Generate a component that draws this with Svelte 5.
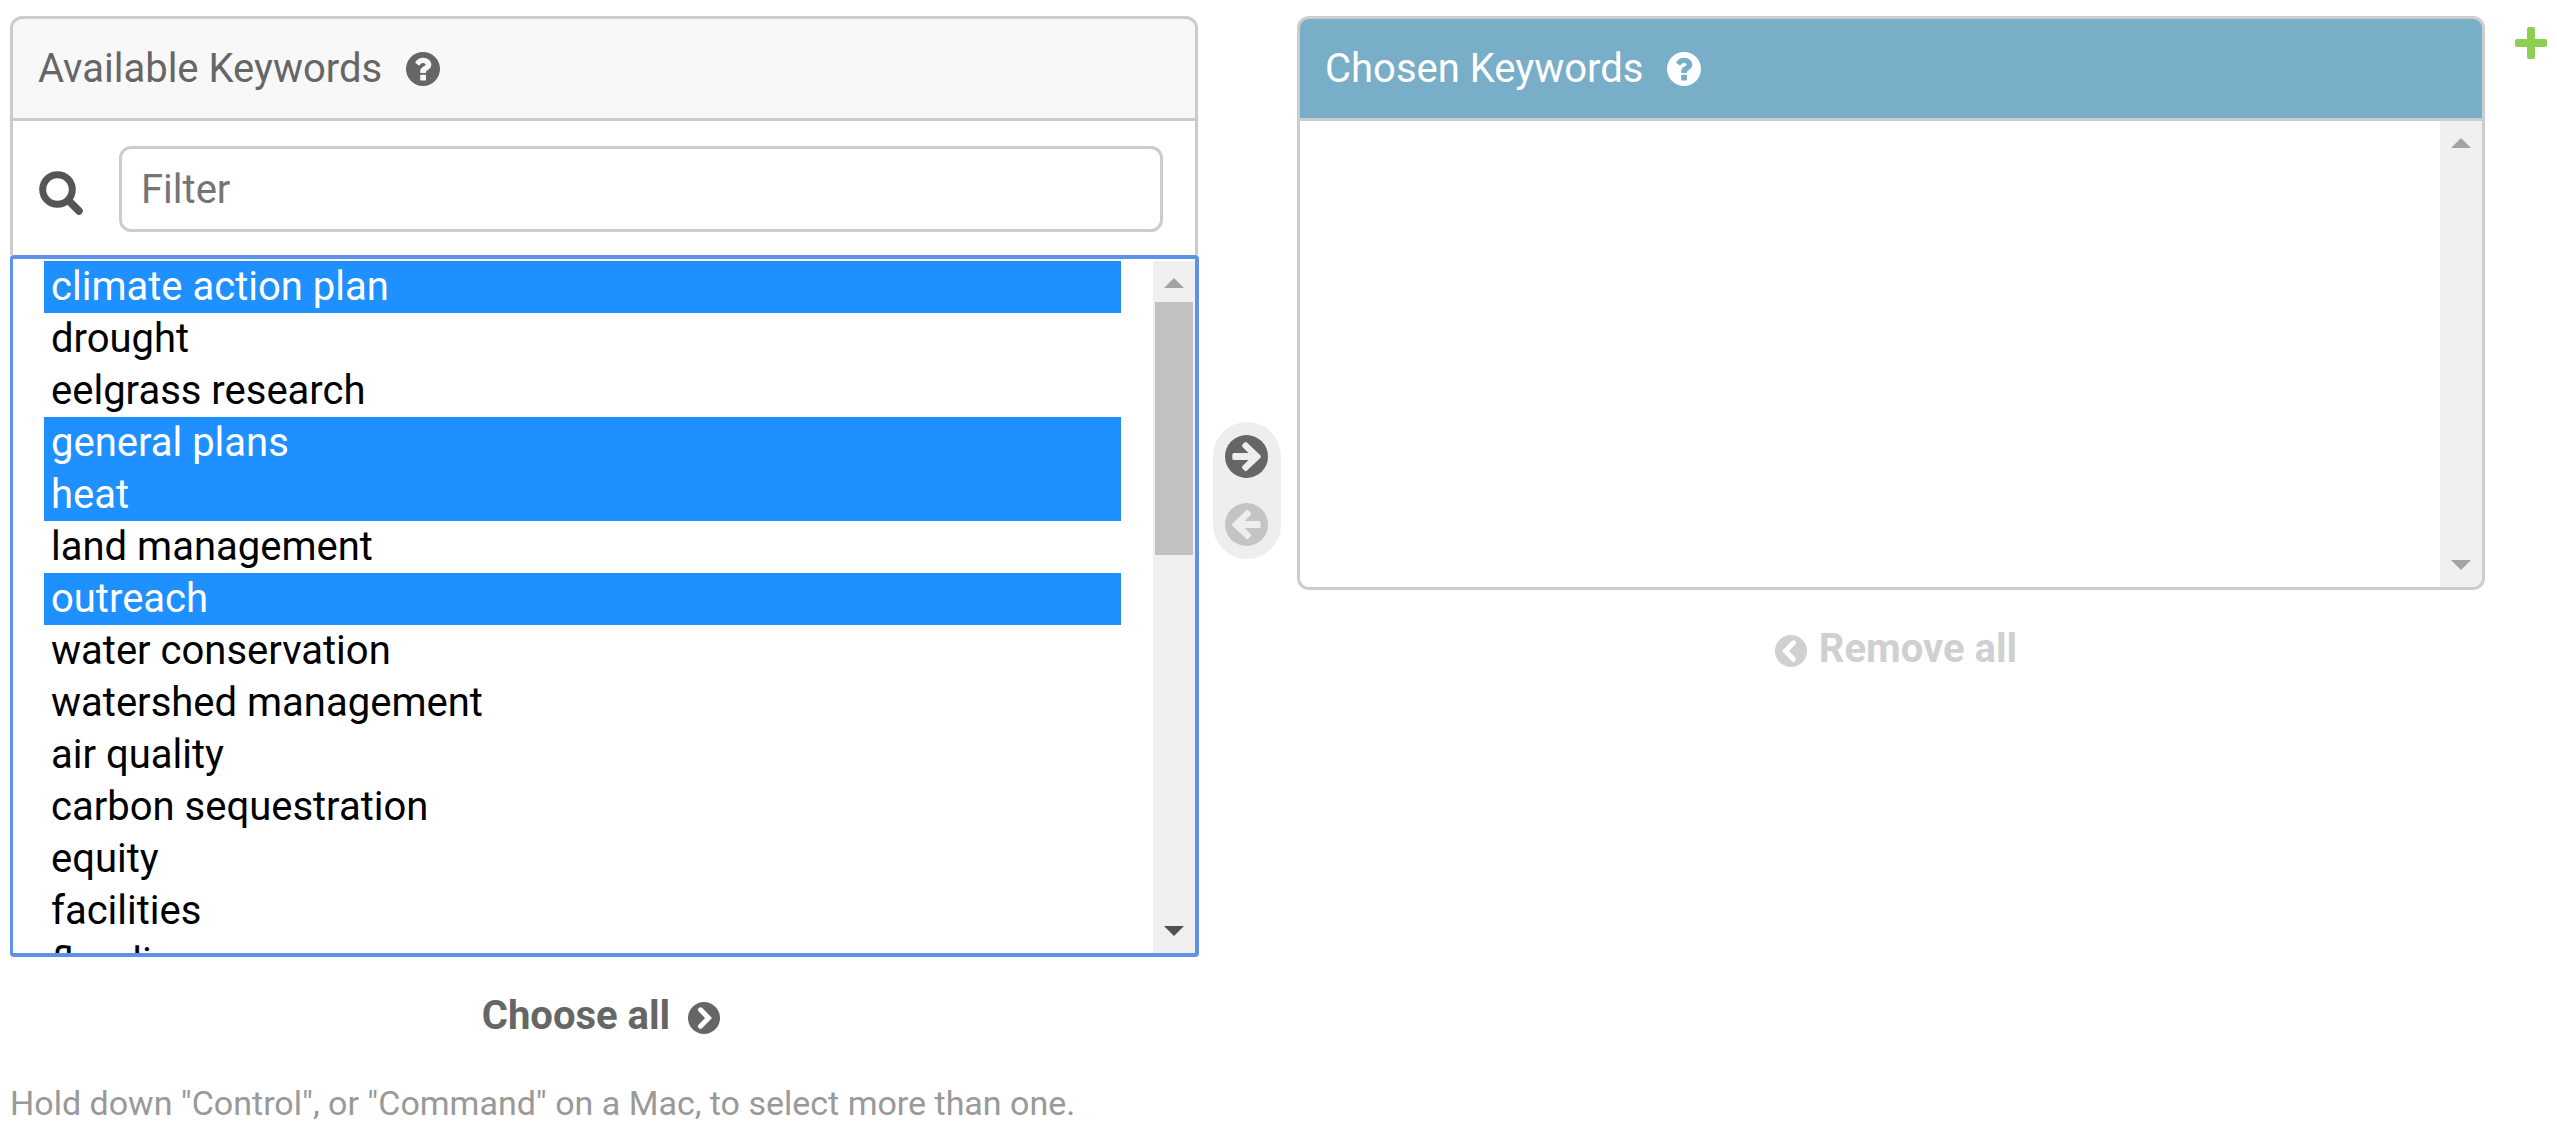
<script>
  const keywords = [
    'climate action plan', 'drought', 'eelgrass research', 'general plans', 'heat',
    'land management', 'outreach', 'water conservation', 'watershed management',
    'air quality', 'carbon sequestration', 'equity', 'facilities', 'flooding'
  ];
  let selected = $state(['climate action plan', 'general plans', 'heat', 'outreach']);
  let picked = $state([]);
</script>

{#snippet help()}
  <svg class="help" viewBox="0 0 34 34" aria-hidden="true">
    <path fill="currentColor" fill-rule="evenodd" d="M17 0a17 17 0 1 0 0 34a17 17 0 0 0 0-34zM14.900 22.800h4.400a.7.7 0 0 1 .7.7v4.200a.7.7 0 0 1-.7.7h-4.400a.7.7 0 0 1-.7-.7v-4.200a.7.7 0 0 1 .7-.7zM17.300 5.700c4.300 0 8 3 8 6.900 0 3.300-2.100 4.700-3.800 5.700-1.100.6-1.500 1.100-1.500 1.900 0 .5-.3.800-.7.800h-4.400c-.4 0-.7-.3-.7-.7v-.9c0-2.600 1.700-4 3.300-4.800 1.300-.6 2-1 2-2 0-1-1.200-1.700-2.400-1.700-1.500 0-2.300.7-3.600 2.300-.3.300-.6.400-1 .1l-3-2.200c-.3-.2-.4-.6-.2-1 1.900-2.900 4.400-4.400 8-4.400z" />
  </svg>
{/snippet}

<main>
  <div class="selector">
    <section class="column">
      <div class="head">
        <label for="available">Available Keywords</label>{@render help()}
      </div>
      <div class="filter">
        <label for="filter" aria-label="Filter keywords">
          <svg class="search" viewBox="0 0 44 44" fill="none" stroke="#555" aria-hidden="true">
            <circle cx="18.500" cy="18.500" r="14.800" stroke-width="7" />
            <path d="M30 30L40 40" stroke-width="7.500" stroke-linecap="round" />
          </svg>
        </label>
        <input id="filter" type="text" placeholder="Filter" />
      </div>
      <div class="list active">
        <select id="available" multiple bind:value={selected}>
          {#each keywords as word}<option value={word}>{word}</option>{/each}
        </select>
        <div class="bar" aria-hidden="true">
          <svg viewBox="0 0 20 10"><path d="M0 10L10 0L20 10z" fill="#a3a3a3" /></svg>
          <div class="track"><div class="thumb"></div></div>
          <svg viewBox="0 0 20 10"><path d="M0 0L10 10L20 0z" fill="#505050" /></svg>
        </div>
      </div>
      <button class="all">
        <span>Choose all</span>
        <svg viewBox="0 0 32 32" aria-hidden="true">
          <circle cx="16" cy="16" r="16" fill="currentColor" />
          <path d="M12.500 7.800L20.500 16L12.500 24.200" fill="none" stroke="#fff" stroke-width="5" stroke-linecap="round" />
        </svg>
      </button>
    </section>

    <div class="movers">
      <button aria-label="Choose">
        <svg viewBox="0 0 43 43" aria-hidden="true">
          <circle cx="21.500" cy="21.500" r="21.500" fill="#666" />
          <path fill="#eee" d="M9 18h14.500l-6-6a1.800 1.800 0 0 1 0-2.500l2-2a1.800 1.800 0 0 1 2.500 0l13.300 12.700a1.900 1.900 0 0 1 0 2.700L22 35.600a1.800 1.800 0 0 1-2.500 0l-2-2a1.800 1.800 0 0 1 0-2.500l6-6H9a1.700 1.700 0 0 1-1.700-1.700v-3.700A1.700 1.700 0 0 1 9 18z" />
        </svg>
      </button>
      <button aria-label="Remove">
        <svg viewBox="0 0 43 43" aria-hidden="true">
          <circle cx="21.500" cy="21.500" r="21.500" fill="#c4c4c4" />
          <path fill="#eee" transform="matrix(-1 0 0 1 43 0)" d="M9 18h14.500l-6-6a1.800 1.800 0 0 1 0-2.500l2-2a1.800 1.800 0 0 1 2.500 0l13.300 12.700a1.900 1.900 0 0 1 0 2.700L22 35.600a1.800 1.800 0 0 1-2.500 0l-2-2a1.800 1.800 0 0 1 0-2.500l6-6H9a1.700 1.700 0 0 1-1.700-1.700v-3.700A1.700 1.700 0 0 1 9 18z" />
        </svg>
      </button>
    </div>

    <section class="column">
      <div class="head chosen">
        <label for="chosen">Chosen Keywords</label>{@render help()}
      </div>
      <div class="list">
        <select id="chosen" multiple bind:value={picked}></select>
        <div class="bar" aria-hidden="true">
          <svg viewBox="0 0 20 10"><path d="M0 10L10 0L20 10z" fill="#a3a3a3" /></svg>
          <svg viewBox="0 0 20 10"><path d="M0 0L10 10L20 0z" fill="#a3a3a3" /></svg>
        </div>
      </div>
      <button class="all off">
        <svg viewBox="0 0 32 32" aria-hidden="true">
          <circle cx="16" cy="16" r="16" fill="currentColor" />
          <path d="M18.500 7.800L10.500 16L18.500 24.200" fill="none" stroke="#fff" stroke-width="5" stroke-linecap="round" />
        </svg>
        <span>Remove all</span>
      </button>
    </section>

    <a class="add" href="#add" aria-label="Add keyword">
      <svg viewBox="0 0 32 32" aria-hidden="true">
        <path fill="#8fce54" d="M14 0h4a2 2 0 0 1 2 2v10h10a2 2 0 0 1 2 2v4a2 2 0 0 1-2 2H20v10a2 2 0 0 1-2 2h-4a2 2 0 0 1-2-2V20H2a2 2 0 0 1-2-2v-4a2 2 0 0 1 2-2h10V2a2 2 0 0 1 2-2z" />
      </svg>
    </a>
  </div>
  <p>Hold down "Control", or "Command" on a Mac, to select more than one.</p>
</main>

<style>
  :global(body) { background: #fff; }
  main {
    padding: 16px 10px 0;
    font-family: Roboto, sans-serif;
    font-size: 40px;
    color: #666;
  }
  main * { box-sizing: border-box; }
  svg { display: block; flex: none; }
  button { border: 0; padding: 0; background: none; font: inherit; color: inherit; cursor: pointer; }
  .selector {
    display: grid;
    grid-template-columns: minmax(0, 1fr) 99px minmax(0, 1fr) 62px;
    align-items: start;
  }
  .column { display: flex; flex-direction: column; }
  .head {
    display: flex;
    align-items: center;
    gap: 24px;
    height: 105px;
    padding: 0 25px;
    border: 3px solid #ccc;
    border-radius: 12px 12px 0 0;
    background: #f8f8f8;
  }
  .chosen { background: #79aec8; color: #fff; }
  .help { width: 34px; height: 34px; }
  .filter {
    display: flex;
    align-items: center;
    gap: 36px;
    height: 134px;
    padding: 2px 32px 0 26px;
    border: solid #ccc;
    border-width: 0 3px;
  }
  .search { width: 44px; height: 44px; margin-top: 8px; }
  input {
    flex: 1;
    min-width: 0;
    height: 86px;
    padding: 0 19px;
    border: 3px solid #ccc;
    border-radius: 12px;
    font: inherit;
    outline: none;
  }
  input::placeholder { color: #757575; opacity: 1; }
  .list {
    display: flex;
    border: 3px solid #ccc;
    border-top: 0;
    border-radius: 0 0 12px 12px;
    overflow: hidden;
    height: 469px;
  }
  .active {
    height: 702px;
    margin-right: -1px;
    border: 4px solid #5e92ea;
    border-left-width: 3px;
    border-radius: 4px;
    padding-top: 2px;
  }
  select {
    flex: 1;
    min-width: 0;
    height: 100%;
    padding: 0 32px 0 31px;
    border: 0;
    outline: none;
    background: #fff;
    font: inherit;
    color: #000;
    scrollbar-width: none;
    overflow-y: scroll;
  }
  option { height: 52px; min-height: 52px; padding: 2px 7px 0; color: #000; }
  option:checked { background: #1e90ff linear-gradient(#1e90ff, #1e90ff); color: #fff; }
  .bar {
    display: flex;
    flex-direction: column;
    align-items: center;
    justify-content: space-between;
    width: 42px;
    padding: 17px 0;
    background: #f0f0f0;
  }
  .bar svg { width: 20px; height: 10px; }
  .track { flex: 1; width: 38px; padding-top: 14px; }
  .thumb { height: 253px; background: #c1c1c1; }
  .all {
    display: flex;
    align-items: center;
    align-self: center;
    gap: 18px;
    margin-top: 32px;
    padding-right: 6px;
    height: 52px;
    font-weight: 700;
  }
  .all svg { width: 32px; height: 32px; margin-top: 6px; }
  .off { gap: 12px; padding: 0 0 0 10px; color: #d0d0d0; }
  .movers {
    display: flex;
    flex-direction: column;
    justify-content: space-between;
    margin-left: 15px;
    height: 137px;
    width: 68px;
    margin-top: 406px;
    padding: 13px 12px;
    border-radius: 34px;
    background: #eee;
  }
  .movers svg { width: 43px; height: 43px; }
  .add { justify-self: end; margin-top: 11px; }
  .add svg { width: 32px; height: 32px; }
  p { margin: 40px 0 0; font-size: 34px; line-height: 44px; color: #999; }
</style>
